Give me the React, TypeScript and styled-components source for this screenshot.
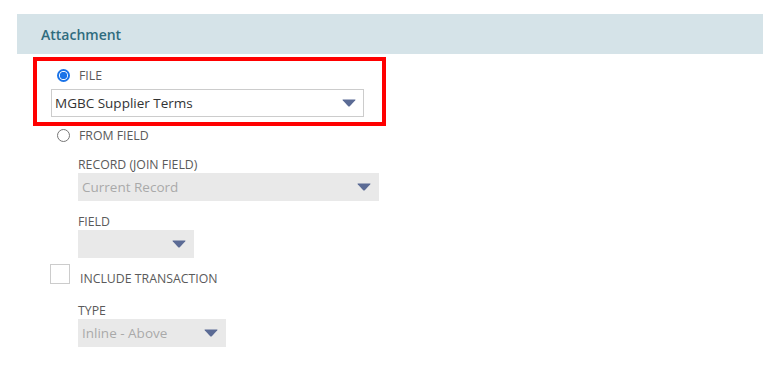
import React, { useState } from 'react';
import styled, { createGlobalStyle } from 'styled-components';

// --- global ---
const GlobalStyle = createGlobalStyle`
  html, body {
    margin: 0;
    padding: 0;
    background: #ffffff;
  }
  body {
    font-family: 'Open Sans', 'Noto Sans', sans-serif;
  }
`;

// --- styled components ---

const Page = styled.div`
  width: 773px;
  height: 384px;
  padding: 14px 10px 0 17px;
  box-sizing: border-box;
  overflow: hidden;
`;

const SectionHeader = styled.div`
  height: 40px;
  display: flex;
  align-items: center;
  padding-left: 24px;
  background-color: #d5e3e8;
  color: #2f6c7e;
  font-size: 14px;
  font-weight: 600;
`;

const SectionBody = styled.div`
  display: flex;
  flex-direction: column;
  align-items: flex-start;
`;

const HighlightBox = styled.div`
  margin: 3px 0 0 16px;
  width: 353px;
  box-sizing: border-box;
  border: 4px solid #ff0000;
  padding: 5px 18px 5px 14px;
  display: flex;
  flex-direction: column;
  gap: 5px;
`;

const RadioRow = styled.label<{ $indent: number }>`
  display: flex;
  align-items: center;
  gap: 9px;
  height: 18px;
  margin-left: ${({ $indent }) => $indent}px;
  cursor: pointer;
`;

const RadioDot = styled.span<{ $checked: boolean }>`
  width: 13px;
  height: 13px;
  border-radius: 50%;
  box-sizing: border-box;
  flex-shrink: 0;
  border: ${({ $checked }) => ($checked ? '2px solid #1a73e8' : '1px solid #767676')};
  background: ${({ $checked }) => ($checked ? 'radial-gradient(circle, #1a73e8 0 3.4px, #fff 4px)' : '#fff')};
`;

const FieldLabel = styled.span`
  font-size: 12.3px;
  line-height: 17px;
  color: #5a5a5a;
  text-transform: uppercase;
`;

const SubGroup = styled.div<{ $gapTop: number }>`
  margin-left: 61px;
  margin-top: ${({ $gapTop }) => $gapTop}px;
  display: flex;
  flex-direction: column;
  align-items: flex-start;
`;

const SubLabel = styled(FieldLabel)`
  & + & {
    margin-top: 12px;
  }
`;

const SelectBox = styled.div<{ $width: string; $disabled?: boolean }>`
  width: ${({ $width }) => $width};
  height: 28px;
  box-sizing: border-box;
  display: flex;
  align-items: center;
  justify-content: space-between;
  padding: 0 7px 0 3px;
  font-size: 13.5px;
  color: ${({ $disabled }) => ($disabled ? '#a9a9a9' : '#333333')};
  background: ${({ $disabled }) => ($disabled ? '#e9e9e9' : '#ffffff')};
  border: 1px solid ${({ $disabled }) => ($disabled ? '#e9e9e9' : '#cccccc')};

  & + ${SubLabel} {
    margin-top: 12px;
  }
`;

const CheckRow = styled.label`
  margin: 6px 0 0 33px;
  display: flex;
  align-items: flex-start;
  gap: 10px;
  cursor: pointer;
`;

const CheckSquare = styled.span`
  width: 20px;
  height: 20px;
  box-sizing: border-box;
  border: 1px solid #cccccc;
  background: #fff;
`;

const CheckText = styled(FieldLabel)`
  padding-top: 6px;
`;

// --- parts ---

const Arrow: React.FC = () => (
  <svg width="14" height="8" viewBox="0 0 14 8">
    <path d="M1 0.5 H13 Q14 0.5 13.3 1.3 L7.8 7.2 Q7 8 6.2 7.2 L0.7 1.3 Q0 0.5 1 0.5 Z" fill="#5b6b95" />
  </svg>
);

const Select: React.FC<{ value: string; width: string; disabled?: boolean }> = ({ value, width, disabled }) => (
  <SelectBox $width={width} $disabled={disabled}>
    <span>{value}</span>
    <Arrow />
  </SelectBox>
);

const App: React.FC = () => {
  const [source, setSource] = useState<'file' | 'field'>('file');

  return (
    <>
      <GlobalStyle />
      <Page>
        <SectionHeader>Attachment</SectionHeader>
        <SectionBody>
          <HighlightBox>
            <RadioRow $indent={6} onClick={() => setSource('file')}>
              <RadioDot $checked={source === 'file'} />
              <FieldLabel>File</FieldLabel>
            </RadioRow>
            <Select value="MGBC Supplier Terms" width="100%" />
          </HighlightBox>

          <RadioRow $indent={40} onClick={() => setSource('field')}>
            <RadioDot $checked={source === 'field'} />
            <FieldLabel>From Field</FieldLabel>
          </RadioRow>

          <SubGroup $gapTop={12}>
            <SubLabel>Record (Join Field)</SubLabel>
            <Select value="Current Record" width="301px" disabled />
            <SubLabel>Field</SubLabel>
            <Select value="" width="116px" disabled />
          </SubGroup>

          <CheckRow>
            <CheckSquare />
            <CheckText>Include Transaction</CheckText>
          </CheckRow>

          <SubGroup $gapTop={15}>
            <SubLabel>Type</SubLabel>
            <Select value="Inline - Above" width="148px" disabled />
          </SubGroup>
        </SectionBody>
      </Page>
    </>
  );
};

export default App;
